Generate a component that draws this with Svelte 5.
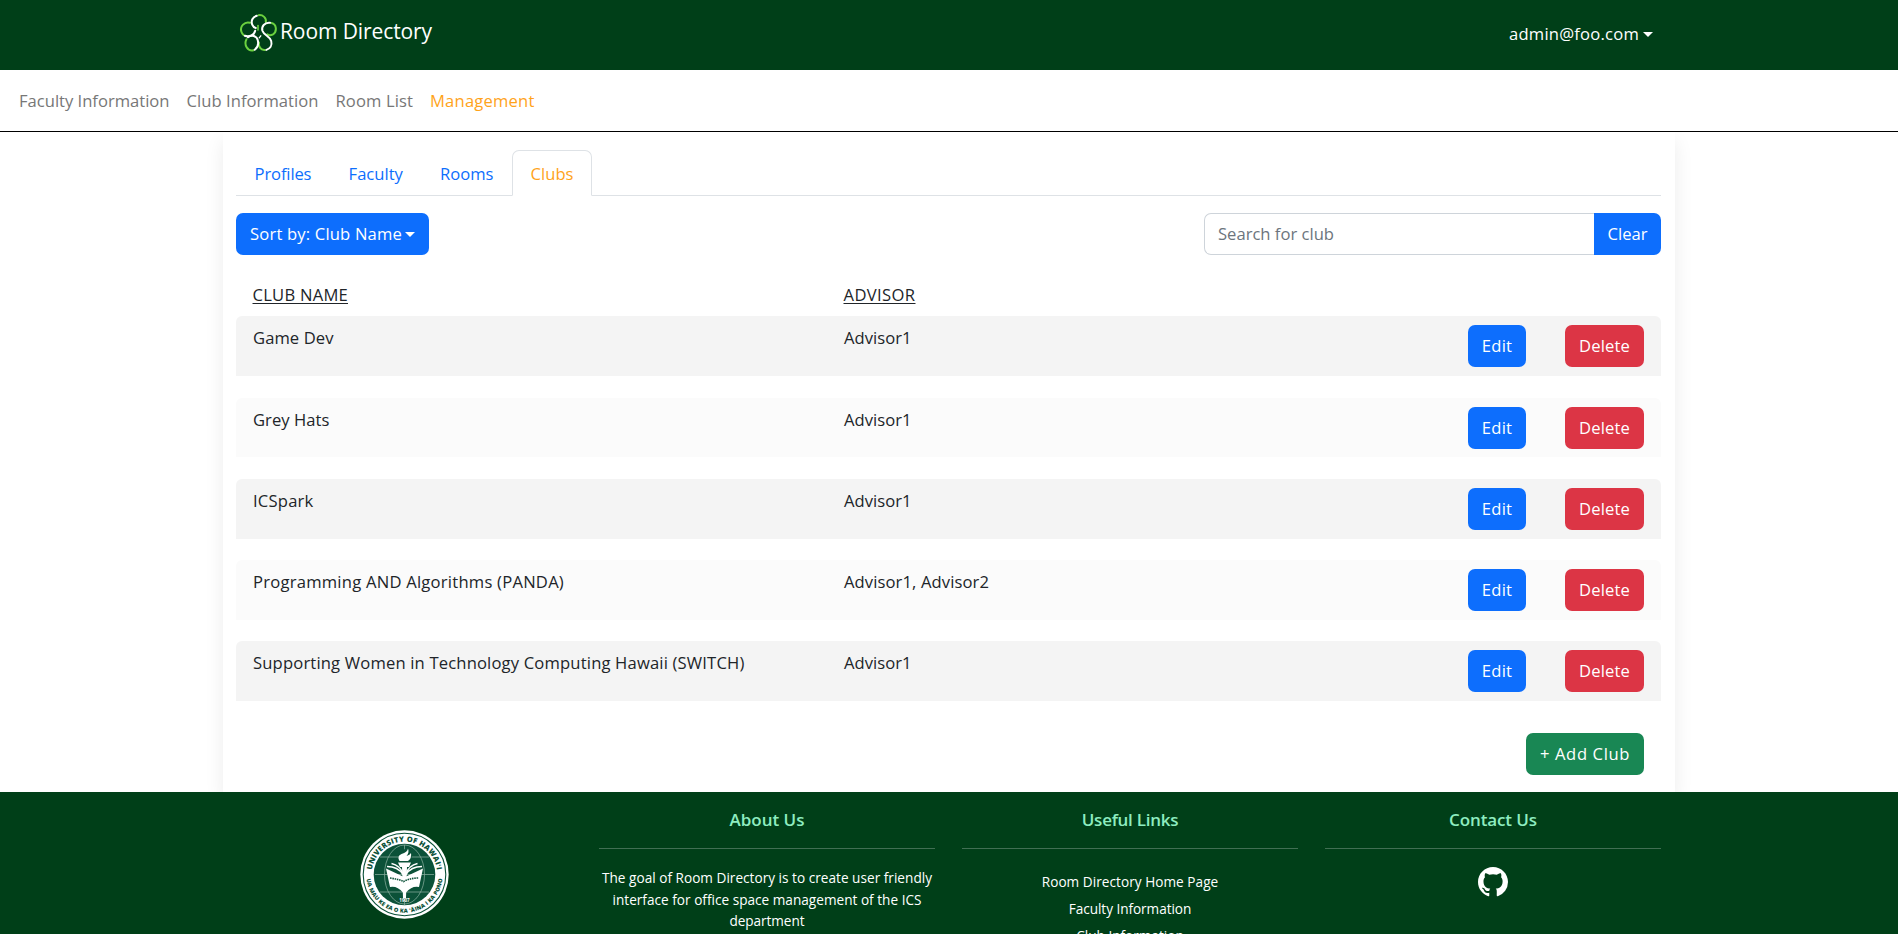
<script>
  const navItems = [
    { label: 'Faculty Information', w: 150.5 },
    { label: 'Club Information', w: 132 },
    { label: 'Room List', w: 77.5 },
    { label: 'Management', w: 104.5, active: true }
  ];
  const tabs = [
    { label: 'Profiles', w: 56.8 },
    { label: 'Faculty', w: 54.3 },
    { label: 'Rooms', w: 53.3 },
    { label: 'Clubs', w: 43, active: true }
  ];
  const clubs = [
    { name: 'Game Dev', w: 80.5, advisor: 'Advisor1', aw: 67.5 },
    { name: 'Grey Hats', w: 76.5, advisor: 'Advisor1', aw: 67.5 },
    { name: 'ICSpark', w: 60.5, advisor: 'Advisor1', aw: 67.5 },
    { name: 'Programming AND Algorithms (PANDA)', w: 311, advisor: 'Advisor1, Advisor2', aw: 145 },
    { name: 'Supporting Women in Technology Computing Hawaii (SWITCH)', w: 491.5, advisor: 'Advisor1', aw: 67.5 }
  ];
  const about = [
    { t: 'The goal of Room Directory is to create user friendly', w: 330 },
    { t: 'interface for office space management of the ICS', w: 309 },
    { t: 'department', w: 75 }
  ];
  const links = [
    { t: 'Room Directory Home Page', w: 176.5 },
    { t: 'Faculty Information', w: 122.5 },
    { t: 'Club Information', w: 107.5 }
  ];

  // Tracks a label out or in until it takes the given width.
  function fit(node, width) {
    node.style.letterSpacing = '0px';
    const natural = node.getBoundingClientRect().width;
    const gap = (width - natural) / node.textContent.length;
    node.style.letterSpacing = gap.toFixed(4) + 'px';
  }
</script>

<header class="top">
  <a class="brand" href="#home">
    <svg class="logo" width="38" height="40" viewBox="4 5 38 40" fill="none" stroke-width="2" stroke-linecap="round">
      <g stroke="#6bd13f">
        <path d="M23.5 7.2C28 6.6 31.6 10 30.8 14" />
        <path d="M36.5 15C41.5 16 42.4 23.5 38 26.3C36 27.5 33.5 27.2 32.3 26.3" />
        <path d="M30 42C26 42.6 23 38.5 24 34.5" />
        <path d="M18.5 42.3C12.5 43.6 8.6 36.5 11.5 31.2" />
        <path d="M15 14.8C9.5 13.2 4.8 18.5 6.3 23.5C6.7 24.8 7.4 26 8.6 27" />
        <path stroke-width="1.6" d="M23 17.5v4.5" />
      </g>
      <g stroke="#fff">
        <path d="M21.8 7.8C17.5 9 15.8 13 17.2 16.6C18 18.6 19.4 19.6 20.8 20" />
        <path d="M35 14.8C29.5 14.2 26.2 18.5 27.4 22.8C28.8 27.2 34.8 28 36.2 33C37.4 37.6 35 40.9 31.4 41.9" />
        <path d="M13 29.3C16.5 26.4 21.5 27.6 22.7 32C23.7 36 22.5 39.8 19.8 41.6" />
        <path d="M9.8 27.8C14.5 29.4 19.2 27 20.2 22.8" />
        <path stroke-width="1.3" d="M24.2 29.8l1.6-2" />
      </g>
    </svg>
    <span class="t" use:fit={152}>Room Directory</span>
  </a>
  <div class="user"><span class="t" use:fit={130}>admin@foo.com</span><i class="caret"></i></div>
</header>

<nav class="menu">
  {#each navItems as n}
    <a href="#nav" class:active={n.active}><span class="t" use:fit={n.w}>{n.label}</span></a>
  {/each}
</nav>

<main class="panel">
  <ul class="tabs">
    {#each tabs as tab}
      <li class:active={tab.active}><span class="t" use:fit={tab.w}>{tab.label}</span></li>
    {/each}
  </ul>

  <div class="tools">
    <button class="btn sort"><span class="t" use:fit={152}>Sort by: Club Name</span><i class="caret"></i></button>
    <div class="search">
      <div class="field"><span class="t" use:fit={116}>Search for club</span></div>
      <button class="btn clear"><span class="t" use:fit={40}>Clear</span></button>
    </div>
  </div>

  <div class="heads">
    <span class="t" use:fit={95.5}>CLUB NAME</span>
    <span class="t" use:fit={72}>ADVISOR</span>
  </div>

  <div class="rows">
    {#each clubs as c}
      <div class="row">
        <div class="cell"><span class="t" use:fit={c.w}>{c.name}</span></div>
        <div class="cell"><span class="t" use:fit={c.aw}>{c.advisor}</span></div>
        <button class="btn edit"><span class="t" use:fit={30.5}>Edit</span></button>
        <button class="btn delete"><span class="t" use:fit={51}>Delete</span></button>
      </div>
    {/each}
  </div>

  <div class="add-line"><button class="btn add"><span class="t" use:fit={90}>+ Add Club</span></button></div>
</main>

<footer>
  <div class="seal">
    <svg width="89" height="89" viewBox="0 0 89 89">
      <defs>
        <path id="arc-top" d="M11.7 44.5a32.8 32.8 0 0 1 65.6 0" />
        <path id="arc-bottom" d="M6.3 44.5a38.2 38.2 0 0 0 76.4 0" />
      </defs>
      <circle cx="44.5" cy="44.5" r="44.2" fill="#fff" />
      <circle cx="44.5" cy="44.5" r="41.3" fill="none" stroke="#0b5138" stroke-width="1.1" />
      <circle cx="44.5" cy="44.5" r="30.8" fill="#0b5138" />
      <g fill="none" stroke="#8fb3a3" stroke-width=".7">
        <ellipse cx="44.5" cy="44.5" rx="20" ry="29.5" />
        <path d="M44.5 15v60M15 44.5h59M20 27h49M20 62h49" />
      </g>
      <path fill="#0b5138" d="M36 40l3-16 5-5 8 4-2 18z" />
      <path fill="#fff" d="M26 38.5l17 8v16q-6-7-13-5.5zM63 38.5l-17 8v16q6-7 13-5.5z" />
      <path fill="none" stroke="#fff" stroke-width="1.5" d="M27 36.5q11 0 16 8M31.5 33.5q8.500 2 11.500 10M62 36.500q-11 0-16 8M57.500 33.500q-8.500 2-11.500 10" />
      <path fill="#fff" d="M38 32.500h13l-2 4.500h-2l-1 31h-3l-1-31h-2zM39.500 31q-3-5 2-7 6-2 6.500-5.500 1.500 4-1.500 7.500 3.500-1 4.500-3 1 5-3 8z" />
      <path fill="none" stroke="#0b5138" stroke-width="1.600" stroke-dasharray="1.500 .8" d="M30 48q8 1 13.500 3.500 7-3.500 15.500-3.500" />
      <text class="year" x="44.5" y="72" text-anchor="middle">1907</text>
      <text class="ring top-ring"><textPath href="#arc-top" startOffset="50%" text-anchor="middle" textLength="94">UNIVERSITY OF HAWAIʻI</textPath></text>
      <text class="ring low-ring"><textPath href="#arc-bottom" startOffset="50%" text-anchor="middle" textLength="111">UA MAU KE EA O KA ʻĀINA I KA PONO</textPath></text>
    </svg>
  </div>
  <section>
    <h5><span class="t" use:fit={75}>About Us</span></h5>
    <hr />
    <div class="about">
      {#each about as a}<div><span class="t" use:fit={a.w}>{a.t}</span></div>{/each}
    </div>
  </section>
  <section>
    <h5><span class="t" use:fit={96.5}>Useful Links</span></h5>
    <hr />
    <div class="links">
      {#each links as l}<div><span class="t" use:fit={l.w}>{l.t}</span></div>{/each}
    </div>
  </section>
  <section>
    <h5><span class="t" use:fit={88}>Contact Us</span></h5>
    <hr />
    <svg class="github" width="30" height="30" viewBox="0 0 16 16" fill="#fff"><path d="M8 0C3.58 0 0 3.58 0 8c0 3.54 2.29 6.53 5.47 7.59.4.07.55-.17.55-.38 0-.19-.01-.82-.01-1.49-2.01.37-2.53-.49-2.69-.94-.09-.23-.48-.94-.82-1.13-.28-.15-.68-.52-.01-.53.63-.01 1.08.58 1.23.82.72 1.21 1.87.87 2.33.66.07-.52.28-.87.51-1.07-1.78-.2-3.64-.89-3.64-3.95 0-.87.31-1.59.82-2.15-.08-.2-.36-1.02.08-2.12 0 0 .67-.21 2.2.82.64-.18 1.32-.27 2-.27s1.36.09 2 .27c1.53-1.04 2.2-.82 2.2-.82.44 1.1.16 1.92.08 2.12.51.56.82 1.27.82 2.15 0 3.07-1.87 3.75-3.65 3.95.29.25.54.73.54 1.48 0 1.07-.01 1.93-.01 2.2 0 .21.15.46.55.38A8.01 8.01 0 0 0 16 8c0-4.42-3.58-8-8-8" /></svg>
  </section>
</footer>

<style>
  :global(body) {
    margin: 0;
    background: #fff;
    color: #212529;
    font: 400 16.6px/26px "Open Sans", "Noto Sans", sans-serif;
    overflow: hidden;
  }
  :global(#app) { height: 934px; overflow: hidden; }
  * { box-sizing: border-box; }
  .t { display: inline-block; white-space: nowrap; }
  a { color: inherit; text-decoration: none; }
  .caret {
    display: inline-block;
    border: 5px solid transparent;
    border-top-color: currentColor;
    border-bottom: 0;
  }
  .top {
    height: 70px;
    padding: 0 245px 0 239px;
    background: #003f18;
    color: #fff;
    display: flex;
    align-items: center;
    justify-content: space-between;
  }
  .brand { display: flex; align-items: center; font-size: 21px; padding-bottom: 5px; }
  .brand .t { margin: -3px 0 0 3px; }
  .user { display: flex; align-items: center; gap: 4px; padding-bottom: 2px; }
  .menu {
    height: 62px;
    padding: 0 19px;
    border-bottom: 1px solid #000;
    display: flex;
    align-items: center;
    gap: 17px;
    color: #777;
  }
  .menu .active, .tabs .active { color: #ffa31a; }
  .panel {
    width: 1452px;
    height: 660px;
    margin: 0 auto;
    padding: 18px 14px 0 13px;
    box-shadow: 0 9px 18px rgba(0, 0, 0, .08);
    clip-path: inset(0 -30px 0 -30px);
  }
  .tabs {
    margin: 0;
    padding: 0;
    height: 46px;
    list-style: none;
    display: flex;
    border-bottom: 1px solid #dee2e6;
    color: #0d6efd;
  }
  .tabs li {
    height: 46px;
    padding: 10px 17.6px 0;
    border: 1px solid transparent;
    border-radius: 7px 7px 0 0;
  }
  .tabs .active { border-color: #dee2e6 #dee2e6 #fff; background: #fff; }
  .tools { display: flex; justify-content: space-between; margin-top: 17px; }
  .btn {
    height: 42px;
    padding: 0;
    border: 0;
    border-radius: 7px;
    background: #0d6efd;
    color: #fff;
    font: inherit;
    display: flex;
    align-items: center;
    justify-content: center;
  }
  .sort { width: 193px; gap: 3px; }
  .search { display: flex; width: 457px; }
  .field {
    flex: 1;
    height: 42px;
    padding: 7px 13px;
    border: 1px solid #ced4da;
    border-right: 0;
    border-radius: 7px 0 0 7px;
    color: #6c757d;
  }
  .clear { width: 67px; border-radius: 0 7px 7px 0; }
  .heads {
    display: grid;
    grid-template-columns: 591px 1fr;
    justify-items: start;
    padding: 27px 16.500px 0;
    height: 61.4px;
  }
  .heads .t { text-decoration: underline; text-underline-offset: 2px; text-decoration-thickness: 1px; }
  .rows { display: grid; gap: 21.4px; }
  .row {
    height: 59.8px;
    display: grid;
    grid-template-columns: 591px 624px 58px 118px;
    padding: 9px 0 0 17px;
    background: #f4f4f4;
    border-radius: 6px 6px 0 0;
  }
  .row:nth-child(even) { background: #fbfbfb; }
  .delete { width: 79px; margin-left: 39px; background: #dc3545; }
  .add-line { display: flex; justify-content: flex-end; padding: 32.4px 17px 0 0; }
  .add { width: 118px; background: #198754; }
  footer {
    height: 142px;
    overflow: hidden;
    background: #003f18;
    color: #fff;
    padding: 0 237px 0 236px;
    display: grid;
    grid-template-columns: 336px 336px 336px 336px;
    column-gap: 27px;
    text-align: center;
    font-size: 13.6px;
  }
  .seal { padding-top: 38px; }
  .seal svg, .github { display: block; margin: 0 auto; }
  h5 { margin: 0; padding-top: 15px; color: #8eedc0; font-size: 17px; line-height: 26px; font-weight: 600; }
  hr { margin: 15px 0 0; border: 0; height: 1px; background: #416f53; }
  .about { padding-top: 18px; line-height: 21.6px; }
  .links { padding-top: 19px; line-height: 27px; }
  .github { margin-top: 18px; }
  .ring { font-family: "Open Sans", sans-serif; font-weight: 800; fill: #0b5138; }
  .top-ring { font-size: 7.4px; }
  .low-ring { font-size: 5.6px; }
  .year { font: 700 4.5px "Open Sans", sans-serif; fill: #fff; }
</style>
